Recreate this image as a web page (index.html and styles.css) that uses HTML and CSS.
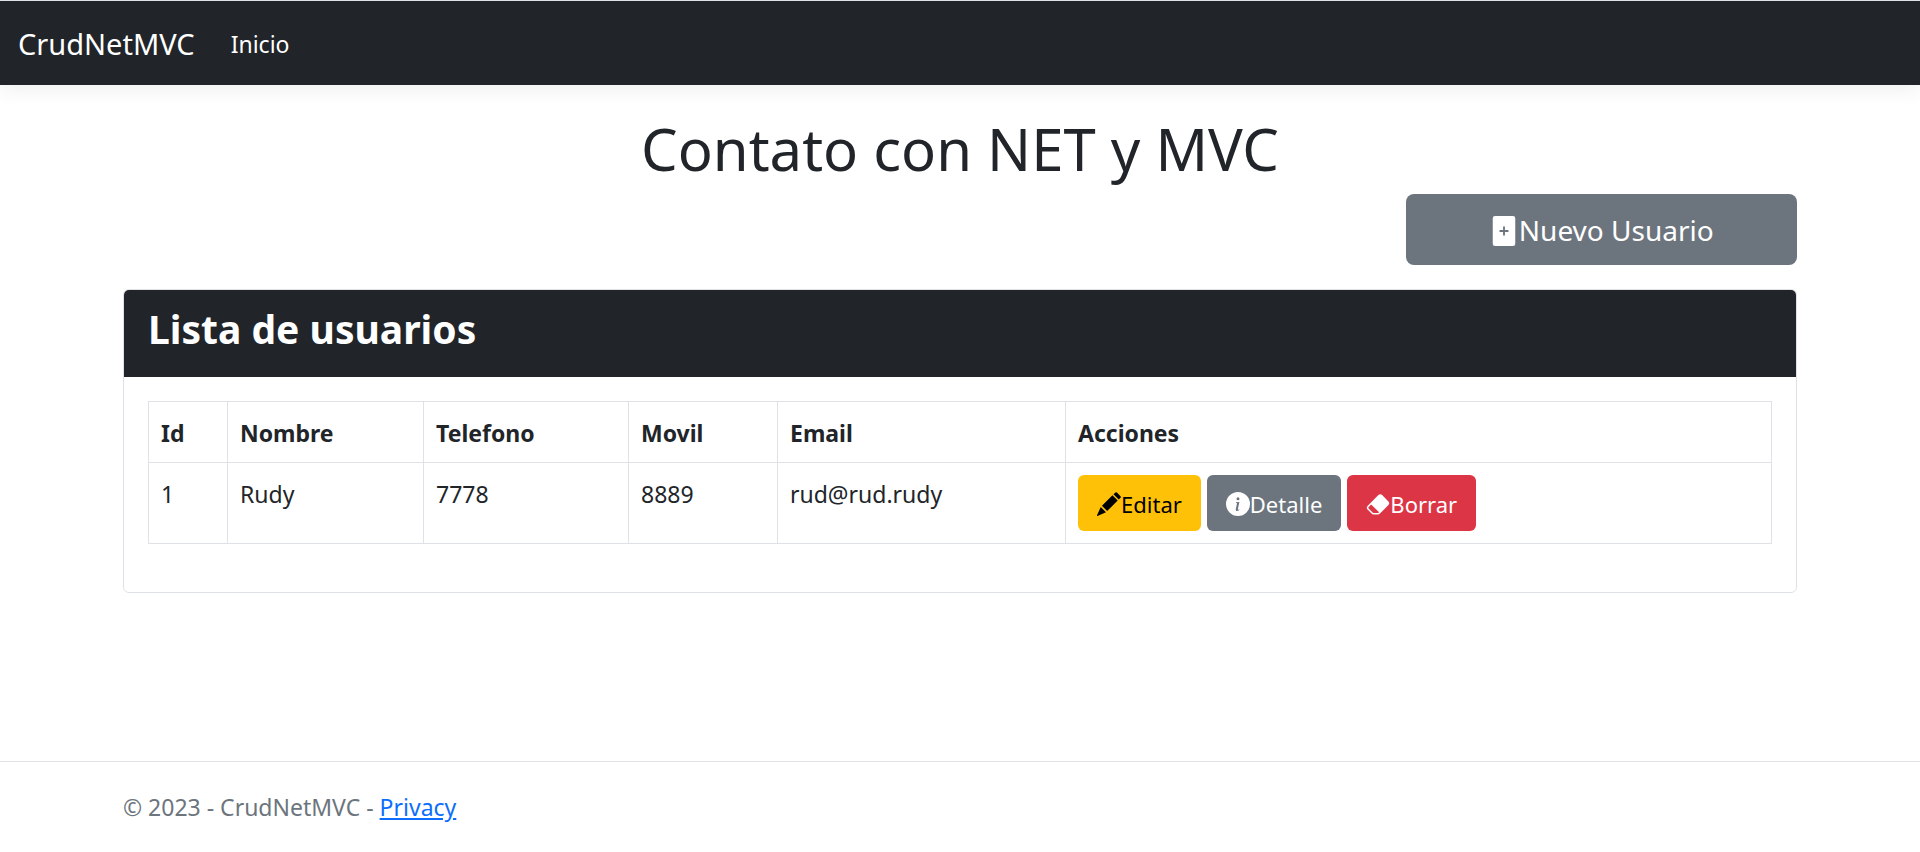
FILE: index.html
```html
<!DOCTYPE html>
<html lang="es">
<head>
<meta charset="utf-8">
<meta name="viewport" content="width=device-width, initial-scale=1">
<title>CrudNetMVC</title>
<link rel="stylesheet" href="styles.css">
</head>
<body>
<header>
  <nav class="navbar">
    <a class="brand" href="#">CrudNetMVC</a>
    <a class="nav-link" href="#">Inicio</a>
  </nav>
</header>
<main class="container">
  <h1 class="title">Contato con NET y MVC</h1>
  <div class="toolbar">
    <button type="button" class="btn btn-secondary btn-lg"><svg class="icon" viewBox="0 0 16 16" aria-hidden="true"><path d="M12.800 0H3.200a1.200 1.200 0 0 0-1.200 1.200v13.600a1.200 1.200 0 0 0 1.200 1.200h9.600a1.200 1.200 0 0 0 1.200-1.200V1.200a1.200 1.200 0 0 0-1.200-1.200zM8.500 6v1.500H10a.5.5 0 0 1 0 1H8.500V10a.5.5 0 0 1-1 0V8.500H6a.5.5 0 0 1 0-1h1.500V6a.5.5 0 0 1 1 0z"/></svg>Nuevo Usuario</button>
  </div>
  <section class="card">
    <h2 class="card-header">Lista de usuarios</h2>
    <div class="card-body">
      <table class="table">
        <colgroup><col class="col-id"><col class="col-name"><col class="col-phone"><col class="col-mobile"><col class="col-email"><col></colgroup>
        <thead>
          <tr><th>Id</th><th>Nombre</th><th>Telefono</th><th>Movil</th><th>Email</th><th>Acciones</th></tr>
        </thead>
        <tbody>
          <tr>
            <td>1</td><td>Rudy</td><td>7778</td><td>8889</td><td>rud@rud.rudy</td>
            <td class="cell-actions">
              <div class="actions">
                <button type="button" class="btn btn-warning"><svg class="icon" viewBox="0 0 16 16" aria-hidden="true"><path d="M12.300.400a.7.7 0 0 1 1 0l2.400 2.400a.7.7 0 0 1 0 1L14.500 5 11 1.500zM10.300 2.200l3.500 3.500-7 7-3.500-3.500zM2.500 10 6 13.500.700 15.900a.4.4 0 0 1-.6-.6z"/></svg>Editar</button>
                <button type="button" class="btn btn-secondary"><svg class="icon" viewBox="0 0 16 16" aria-hidden="true"><path d="M8 16A8 8 0 1 0 8 0a8 8 0 0 0 0 16zm.93-9.412-1 4.705c-.07.34.029.533.304.533.194 0 .487-.07.686-.246l-.088.416c-.287.346-.92.598-1.465.598-.703 0-1.002-.422-.808-1.319l.738-3.468c.064-.293.006-.399-.287-.47l-.451-.081.082-.381 2.29-.287zM8 5.5a1 1 0 1 1 0-2 1 1 0 0 1 0 2z"/></svg>Detalle</button>
                <button type="button" class="btn btn-danger"><svg class="icon" viewBox="0 0 16 16" aria-hidden="true"><path d="M8.086 2.207a2 2 0 0 1 2.828 0l3.879 3.879a2 2 0 0 1 0 2.828l-5.5 5.5A2 2 0 0 1 7.879 15H5.12a2 2 0 0 1-1.414-.586l-2.5-2.5a2 2 0 0 1 0-2.828l6.879-6.879zm.66 11.34L3.453 8.254 1.914 9.793a1 1 0 0 0 0 1.414l2.5 2.5a1 1 0 0 0 .707.293H7.88a1 1 0 0 0 .707-.293l.16-.16z"/></svg>Borrar</button>
              </div>
            </td>
          </tr>
        </tbody>
      </table>
    </div>
  </section>
</main>
<footer class="footer">
  <div class="container">© 2023 - CrudNetMVC - <a href="#">Privacy</a></div>
</footer>
</body>
</html>
```
FILE: styles.css
```css
*, *::before, *::after { box-sizing: border-box; }

body {
  margin: 0;
  min-height: 100vh;
  display: flex;
  flex-direction: column;
  background: #fff;
  color: #212529;
  font-family: "Segoe UI", "Noto Sans", sans-serif;
  font-size: 23px;
  line-height: 36px;
}

.navbar {
  display: flex;
  align-items: center;
  gap: 36px;
  min-height: 85px;
  padding: 14px 18px 12px;
  border-top: 1px solid #dee2e6;
  background: #212529;
  box-shadow: 0 6px 18px rgba(0, 0, 0, 0.06);
}

.navbar a { color: #fff; text-decoration: none; }
.brand { font-size: 29px; }

.container {
  width: 100%;
  max-width: 1710px;
  margin: 0 auto;
  padding: 0 18px;
}

.title {
  margin: 27px 0 9px;
  font-size: 58px;
  font-weight: 400;
  line-height: 73px;
  text-align: center;
}

.toolbar {
  display: grid;
  grid-template-columns: repeat(4, 1fr);
  gap: 36px;
  margin-bottom: 24px;
}

.toolbar .btn { grid-column: 4; }

.btn {
  display: inline-flex;
  align-items: center;
  justify-content: center;
  padding: 11px 19px 9px;
  border: 0;
  border-radius: 6px;
  font: inherit;
  font-size: 22px;
  cursor: pointer;
}

.btn-lg {
  padding: 15px 24px 13px;
  border-radius: 8px;
  font-size: 28px;
  line-height: 43px;
}

.btn-secondary { background: #6c757d; color: #fff; }
.btn-warning { background: #ffc107; color: #000; }
.btn-danger { background: #dc3545; color: #fff; }

.icon {
  width: 24px;
  height: 24px;
  fill: currentColor;
}

.btn-lg .icon { width: 30px; height: 30px; }

.card {
  border: 1px solid #dee2e6;
  border-radius: 6px;
}

.card-header {
  margin: 0;
  padding: 13px 24px 22px;
  border-radius: 5px 5px 0 0;
  background: #212529;
  color: #fff;
  font-size: 39px;
  font-weight: 700;
  line-height: 52px;
}

.card-body { padding: 24px 24px 48px; }

.table {
  width: 100%;
  border-collapse: collapse;
  table-layout: fixed;
}

.table th, .table td {
  padding: 13px 12px 11px;
  border: 1px solid #dee2e6;
  text-align: left;
  vertical-align: top;
}

.table .cell-actions { padding: 12px; }

.col-id { width: 79px; }
.col-name { width: 196px; }
.col-phone { width: 205px; }
.col-mobile { width: 149px; }
.col-email { width: 288px; }

.actions { display: flex; gap: 6px; }

.footer {
  margin-top: auto;
  border-top: 1px solid #dee2e6;
  color: #6c757d;
  line-height: 90px;
}

.footer a { color: #0d6efd; }
```
